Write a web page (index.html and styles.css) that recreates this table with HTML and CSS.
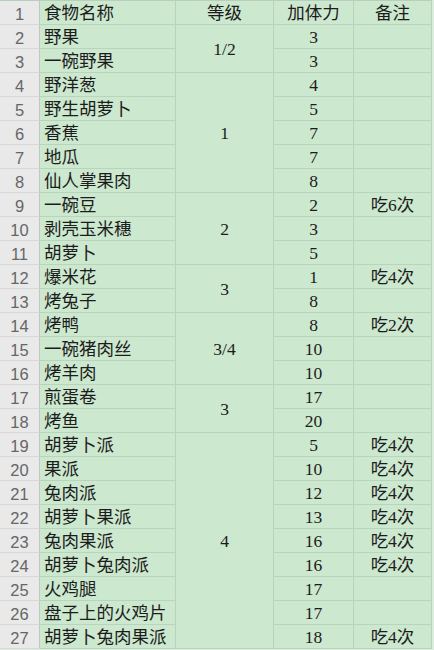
FILE: index.html
```html
<!DOCTYPE html>
<html lang="zh-CN">
<head>
<meta charset="utf-8">
<title>食物</title>
<link rel="stylesheet" href="styles.css">
</head>
<body>
<div class="sheet">
  <div class="rh">1</div><div class="c name">食物名称</div><div class="c mid">等级</div><div class="c mid">加体力</div><div class="c mid">备注</div>
  <div class="rh">2</div><div class="c name">野果</div><div class="c mid span2">1/2</div><div class="c mid">3</div><div class="c mid"></div>
  <div class="rh">3</div><div class="c name">一碗野果</div><div class="c mid">3</div><div class="c mid"></div>
  <div class="rh">4</div><div class="c name">野洋葱</div><div class="c mid span5">1</div><div class="c mid">4</div><div class="c mid"></div>
  <div class="rh">5</div><div class="c name">野生胡萝卜</div><div class="c mid">5</div><div class="c mid"></div>
  <div class="rh">6</div><div class="c name">香蕉</div><div class="c mid">7</div><div class="c mid"></div>
  <div class="rh">7</div><div class="c name">地瓜</div><div class="c mid">7</div><div class="c mid"></div>
  <div class="rh">8</div><div class="c name">仙人掌果肉</div><div class="c mid">8</div><div class="c mid"></div>
  <div class="rh">9</div><div class="c name">一碗豆</div><div class="c mid span3">2</div><div class="c mid">2</div><div class="c mid">吃6次</div>
  <div class="rh">10</div><div class="c name">剥壳玉米穗</div><div class="c mid">3</div><div class="c mid"></div>
  <div class="rh">11</div><div class="c name">胡萝卜</div><div class="c mid">5</div><div class="c mid"></div>
  <div class="rh">12</div><div class="c name">爆米花</div><div class="c mid span2">3</div><div class="c mid">1</div><div class="c mid">吃4次</div>
  <div class="rh">13</div><div class="c name">烤兔子</div><div class="c mid">8</div><div class="c mid"></div>
  <div class="rh">14</div><div class="c name">烤鸭</div><div class="c mid span3">3/4</div><div class="c mid">8</div><div class="c mid">吃2次</div>
  <div class="rh">15</div><div class="c name">一碗猪肉丝</div><div class="c mid">10</div><div class="c mid"></div>
  <div class="rh">16</div><div class="c name">烤羊肉</div><div class="c mid">10</div><div class="c mid"></div>
  <div class="rh">17</div><div class="c name">煎蛋卷</div><div class="c mid span2">3</div><div class="c mid">17</div><div class="c mid"></div>
  <div class="rh">18</div><div class="c name">烤鱼</div><div class="c mid">20</div><div class="c mid"></div>
  <div class="rh">19</div><div class="c name">胡萝卜派</div><div class="c mid span9">4</div><div class="c mid">5</div><div class="c mid">吃4次</div>
  <div class="rh">20</div><div class="c name">果派</div><div class="c mid">10</div><div class="c mid">吃4次</div>
  <div class="rh">21</div><div class="c name">兔肉派</div><div class="c mid">12</div><div class="c mid">吃4次</div>
  <div class="rh">22</div><div class="c name">胡萝卜果派</div><div class="c mid">13</div><div class="c mid">吃4次</div>
  <div class="rh">23</div><div class="c name">兔肉果派</div><div class="c mid">16</div><div class="c mid">吃4次</div>
  <div class="rh">24</div><div class="c name">胡萝卜兔肉派</div><div class="c mid">16</div><div class="c mid">吃4次</div>
  <div class="rh">25</div><div class="c name">火鸡腿</div><div class="c mid">17</div><div class="c mid"></div>
  <div class="rh">26</div><div class="c name">盘子上的火鸡片</div><div class="c mid">17</div><div class="c mid"></div>
  <div class="rh">27</div><div class="c name">胡萝卜兔肉果派</div><div class="c mid">18</div><div class="c mid">吃4次</div>
</div>
</body>
</html>
```

FILE: styles.css
```css
html, body {
  margin: 0;
  padding: 0;
  background: #dbeedd;
}

.sheet {
  display: grid;
  grid-template-columns: 40px 136px 98px 80px 78px;
  grid-auto-rows: 24px;
  width: 432px;
  border-top: 1px solid #b9cfbc;
}

.sheet > div {
  box-sizing: border-box;
  display: flex;
  align-items: center;
  padding-top: 3px;
  overflow: hidden;
  white-space: nowrap;
}

.rh {
  background: #e9e9e9;
  border-right: 1px solid #c4c4c4;
  border-bottom: 1px solid #d8d8d8;
  justify-content: center;
  font-family: "Liberation Sans", "Noto Sans", sans-serif;
  font-size: 16.5px;
  line-height: 1;
  color: #666666;
}

.c {
  background: #cce8cf;
  border-right: 1px solid #b9d3bc;
  border-bottom: 1px solid #b9d3bc;
  font-family: "Liberation Serif", "Noto Sans CJK SC", serif;
  font-size: 17.5px;
  line-height: 1;
  color: #1c1c1c;
}

.name {
  padding-left: 4px;
}

.mid {
  justify-content: center;
}

.span2 { grid-row: span 2; }
.span3 { grid-row: span 3; }
.span5 { grid-row: span 5; }
.span9 { grid-row: span 9; }
```
